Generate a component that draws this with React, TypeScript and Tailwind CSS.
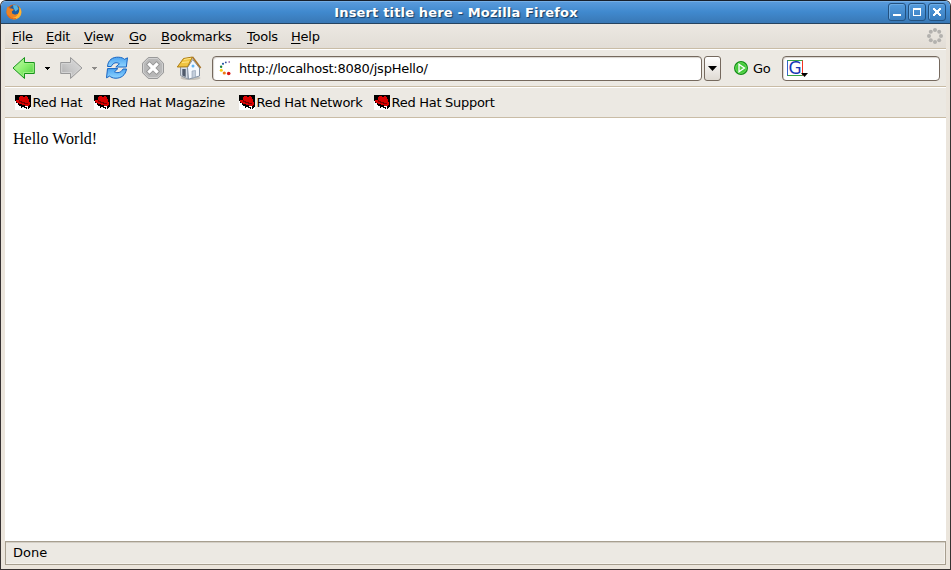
import React from "react";

const menus = [
  { name: "File", w: "w-[34px]" },
  { name: "Edit", w: "w-[38px]" },
  { name: "View", w: "w-[45px]" },
  { name: "Go", w: "w-[32px]" },
  { name: "Bookmarks", w: "w-[86px]" },
  { name: "Tools", w: "w-[44px]" },
  { name: "Help", w: "w-[40px]" },
];

const bookmarks = [
  { name: "Red Hat", w: "w-[79px]" },
  { name: "Red Hat Magazine", w: "w-[145px]" },
  { name: "Red Hat Network", w: "w-[135px]" },
  { name: "Red Hat Support", w: "w-[130px]" },
];

function FirefoxLogo() {
  return (
    <svg width="16" height="16" viewBox="0 0 16 16">
      <defs>
        <linearGradient id="fox" x1="0" y1="0" x2="1" y2="1">
          <stop offset="0" stopColor="#c9500f" />
          <stop offset="0.55" stopColor="#ee7d1c" />
          <stop offset="1" stopColor="#ffc940" />
        </linearGradient>
      </defs>
      <circle cx="8" cy="8" r="7.6" fill="url(#fox)" />
      <circle cx="8.6" cy="6" r="5" fill="#1f5c9f" />
      <path d="M7 1 11 1.3 12.5 5 9.5 7.5 7.5 4Z" fill="#55b4e2" />
      <path d="M.7 5 1.8 2.2l1.4 2 2.8.3 2 1.2-2.2 1.8.6 2.3 2.8 1 3-.7-2 2.6-4 1-4-2L.5 9Z" fill="#ee8424" />
      <path d="M13.4 3c2.7 3 2 8-1 10.2-2 1.5-4 1.5-6 .8 4 0 7.4-4 7-11Z" fill="#ffb733" />
      <path d="M1.5 11c1.8 3 5 4.4 8.5 3.7" stroke="#e0651d" fill="none" />
    </svg>
  );
}

function Arrow({ forward = false }: { forward?: boolean }) {
  return (
    <svg width="24" height="24" viewBox="0 0 24 24" className={forward ? "-scale-x-100" : ""}>
      <defs>
        <linearGradient id={forward ? "arrowGray" : "arrowGreen"} x1="0" y1="0" x2="1" y2="1">
          <stop offset="0" stopColor={forward ? "#dedede" : "#d1ffb4"} />
          <stop offset="0.5" stopColor={forward ? "#c9c9c9" : "#8cef70"} />
          <stop offset="1" stopColor={forward ? "#aaa" : "#40c936"} />
        </linearGradient>
      </defs>
      <path d="M1 12 12.5 1.5v5h9.8v11h-9.8v5Z" fill={forward ? "url(#arrowGray)" : "url(#arrowGreen)"} stroke={forward ? "#999" : "#16931a"} strokeLinejoin="round" />
      <path d="M2.8 12 11.5 3.9v3.6h9.8v9h-9.8v3.6Z" fill="none" stroke={forward ? "#d4d4d4" : "#a0f086"} />
    </svg>
  );
}

function Caret({ gray = false }: { gray?: boolean }) {
  return (
    <svg width="5" height="3" viewBox="0 0 5 3" shapeRendering="crispEdges">
      <path d="M0 0h5v1H4v1H3v1H2V2H1V1H0Z" fill={gray ? "#8d8b88" : "#000"} />
    </svg>
  );
}

function Reload() {
  return (
    <svg width="24" height="24" viewBox="0 0 24 24">
      <defs>
        <linearGradient id="reload" x2="0" y2="1">
          <stop stopColor="#4ba3f0" />
          <stop offset="1" stopColor="#92d6ff" />
        </linearGradient>
      </defs>
      <g fill="url(#reload)" stroke="#1764c2" strokeLinejoin="round">
        <path d="M2.5 10.5C3 4 7.5 .9 13.5 1.2c3 .1 4.8 1 6 2.1l3-1.5-1.2 9.2H10.8l3.6-3.2c-2.8-2-6.3-1.3-8.2 2.7Z" />
        <path d="M21.5 13c-.8 6-5.5 9.6-11.5 9.2-2.2-.2-4-.9-5.3-2.1l-3.2 1.7 1-9.2h10.4l-3.4 3.2c3 1.8 6.6.8 8.5-2.8Z" />
      </g>
    </svg>
  );
}

function Stop() {
  return (
    <svg width="24" height="24" viewBox="0 0 24 24">
      <path d="M7.3 1.5h9.4l5.8 5.8v9.4l-5.8 5.8H7.3l-5.8-5.8V7.3Z" fill="#b8b8b8" stroke="#999" />
      <path d="M7.7 2.5h8.6l5.2 5.2v8.6l-5.2 5.2H7.7l-5.2-5.2V7.7Z" fill="none" stroke="#d1d1d1" />
      <path d="m8.5 8.5 7 7m0-7-7 7" stroke="#969696" strokeWidth="5" strokeLinecap="square" />
      <path d="m8.5 8.5 7 7m0-7-7 7" stroke="#fff" strokeWidth="3.2" strokeLinecap="square" />
    </svg>
  );
}

function Home() {
  return (
    <svg width="26" height="26" viewBox="0 0 26 26">
      <ellipse cx="14.5" cy="23" rx="10" ry="2" fill="#aaa69f" opacity=".6" />
      <path d="M4.5 11.5 12 11v13l-7.5-3.4Z" fill="#d5dde7" stroke="#8f98a3" />
      <path d="m11.5 12.5 5.2-8 6.8 8.5v8l-11 3.2Z" fill="#f4f8fd" stroke="#8492a3" />
      <path d="M6.3 14h3.4v8l-3.4-1.5Z" fill="#505b6b" />
      <path d="m16 16 3.5-.5v6.7L16 23Z" fill="#c3cedb" stroke="#8d9caf" strokeWidth=".6" />
      <circle cx="17" cy="11" r="1.5" fill="#60b4f4" />
      <path d="M7.5 3.5 16.5 2 11.5 11.8l-10.2.2Z" fill="#f0c441" stroke="#ad7c10" strokeLinejoin="round" />
      <path d="m8 4.5 7-1.2M6 7.5l7-.7" stroke="#ffe78b" />
      <path d="m16.5 2 8.2 11" fill="none" stroke="#a8752c" strokeWidth="1.6" />
    </svg>
  );
}

function RedHat() {
  return (
    <svg width="16" height="15" viewBox="0 0 16 15" shapeRendering="crispEdges">
      <path d="M0 0h16v15H0Z" fill="#000" />
      <path d="M0 6h1v2h2v2h2v1h3v1h2v-1h5v1h1v3H0Z" fill="#fff" />
      <path d="M5 1h3v1h2V1h2v1h1v2h1v3h1v3h-1v1h-4v-1H7V9H4V8H2V7H1V5h3V2h1Z" fill="#d80000" />
      <path d="M4 5h1v1h2v1h3v1h3v1H9V8H6V7H4Z" fill="#780000" />
      <path d="M3 9h2v1h3v1h2v1h2v2h-1v-1H9v-1H7v1H6v-2H4v-1H3Z M13 11h2v2h-1v1h-1Z" fill="#000" />
    </svg>
  );
}

function Spinner() {
  const dots = [
    [12.2, 2, "#703090", 0.8], [8.8, 2.4, "#334f9c", 0.9], [6, 3.8, "#2758a6", 1.1],
    [4.1, 6.7, "#198039", 1.2], [4.3, 10.3, "#f6cd13", 1.5], [7.3, 13, "#ed7915", 1.6],
    [11.7, 13.5, "#d81717", 1.8],
  ] as const;
  return (
    <svg width="16" height="16" viewBox="1 0 16 16">
      {dots.map(([x, y, color, r]) => <circle key={color} cx={x} cy={y} r={r} fill={color} />)}
    </svg>
  );
}

function Throbber() {
  return (
    <svg width="16" height="16" viewBox="0 0 16 16" fill="#b3b1ae">
      <circle cx="8" cy="2" r="2" /><circle cx="12.2" cy="3.8" r="2" />
      <circle cx="14" cy="8" r="2" /><circle cx="12.2" cy="12.2" r="2" />
      <circle cx="8" cy="14" r="2" /><circle cx="3.8" cy="12.2" r="2" />
      <circle cx="2" cy="8" r="2" /><circle cx="3.8" cy="3.8" r="2" />
    </svg>
  );
}

function WindowButton({ kind }: { kind: string }) {
  return (
    <div className="flex h-[18px] w-[18px] items-center justify-center rounded-[3px] border border-[#23517f] bg-linear-to-b from-[#549bdd] to-[#397ec0] shadow-[inset_1px_1px_0_#6cabe5]">
      <svg width="10" height="10" viewBox="0 0 10 10" shapeRendering="crispEdges">
        {kind === "min" && <path d="M1 7h8v2H1Z" fill="#fff" />}
        {kind === "max" && <path d="M1 1h8v8H1Zm1 2v5h6V3Z" fill="#fff" fillRule="evenodd" />}
        {kind === "close" && <path d="M1 1h2v1h1v1h2V2h1V1h2v2H8v1H7v2h1v1h1v2H7V8H6V7H4v1H3v1H1V7h1V6h1V4H2V3H1Z" fill="#fff" />}
      </svg>
    </div>
  );
}

export default function App() {
  return (
    <div className="h-[570px] w-[951px] overflow-hidden bg-white font-['DejaVu_Sans',sans-serif] text-[13px] leading-4 tracking-[-0.24px] text-black">
      <div className="flex h-full flex-col overflow-hidden rounded-t-[6px] border border-t-[#171f2b] border-r-[#373232] border-b-[#373232] border-l-[#373232] bg-[#ece9e3]">
        <header className="flex h-[23px] shrink-0 items-center border-b border-[#26435f] bg-linear-to-b from-[#5b9cdd] via-[#4089ce] to-[#3978b5] pr-[4px] pl-[5px] shadow-[inset_0_1px_0_#75aee5]">
          <FirefoxLogo />
          <h1 className="flex-1 pt-[2px] pl-[2px] text-center text-[13px] leading-4 font-bold tracking-[0.16px] whitespace-nowrap text-white [text-shadow:1px_1px_1px_#173b60]">
            Insert title here - Mozilla Firefox
          </h1>
          <div className="flex gap-[2px]">
            <WindowButton kind="min" /><WindowButton kind="max" /><WindowButton kind="close" />
          </div>
        </header>

        <div className="flex min-h-0 flex-1 flex-col border-r-4 border-b-[4px] border-l-4 border-[#ebe5dc] shadow-[inset_1px_0_0_#f8f5f0]">
          <nav className="flex h-[25px] shrink-0 items-center border-b border-[#c9bca6] bg-linear-to-b from-[#ece8e2] to-[#e2ddd6] pr-[3px] pl-[7px]">
            {menus.map(({ name, w }) => (
              <div key={name} className={`${w} shrink-0 pt-[2px] whitespace-nowrap`}>
                <span className="underline decoration-1 underline-offset-2">{name[0]}</span>{name.slice(1)}
              </div>
            ))}
            <div className="ml-auto"><Throbber /></div>
          </nav>

          <div className="flex h-[38px] shrink-0 items-center border-t border-b border-t-white border-b-[#c9bca6] bg-[#ece9e3] pl-[7px]">
            <Arrow />
            <div className="ml-[9px]"><Caret /></div>
            <div className="ml-[9px]"><Arrow forward /></div>
            <div className="ml-[9px]"><Caret gray /></div>
            <div className="ml-[8px]"><Reload /></div>
            <div className="ml-[12px]"><Stop /></div>
            <div className="ml-[11px]"><Home /></div>
            <div className="ml-[10px] flex h-[25px] w-[490px] shrink-0 items-center rounded-[4px] border border-[#75695e] bg-white pl-[5px] shadow-[inset_1px_1px_1px_#d8d4cf]">
              <Spinner />
              <span className="ml-[5px] pt-px whitespace-nowrap">http://localhost:8080/jspHello/</span>
            </div>
            <div className="ml-[2px] flex h-[25px] w-[17px] shrink-0 items-center justify-center rounded-[3px] border border-[#75695e] bg-linear-to-b from-white to-[#dfdad3]">
              <svg width="9" height="5" viewBox="0 0 9 5"><path d="M0 0h9L4.5 5Z" /></svg>
            </div>
            <svg className="ml-[13px]" width="14" height="14" viewBox="0 0 14 14">
              <circle cx="7" cy="7" r="6.4" fill="#42c839" stroke="#168d1a" strokeWidth="1.2" />
              <circle cx="7" cy="7" r="5.3" fill="none" stroke="#6bdc5c" strokeWidth=".8" />
              <path d="m5 3.2 5.5 3.8L5 10.8Z" fill="#5ecf50" stroke="#fff" strokeWidth="1.3" />
            </svg>
            <span className="ml-[5px] w-[18px] pt-px">Go</span>
            <div className="ml-[11px] flex h-[25px] w-[158px] shrink-0 items-center rounded-[4px] border border-[#75695e] bg-white pl-[4px] shadow-[inset_1px_1px_1px_#d8d4cf]">
              <div className="relative flex h-[16px] w-[16px] items-center justify-center border border-t-[#36a344] border-r-[#f33423] border-b-[#36a344] border-l-[#3565cc]">
                <span className="text-[17px] leading-[14px] text-[#1737b5]">G</span>
                <svg className="absolute -right-[6px] -bottom-[2px]" width="7" height="4" viewBox="0 0 7 4"><path d="M0 0h7L3.5 4Z" /></svg>
              </div>
            </div>
          </div>

          <div className="flex h-[31px] shrink-0 items-center border-t border-b border-t-white border-b-[#c9bca6] bg-[#ece9e3] pl-[10px]">
            {bookmarks.map(({ name, w }) => (
              <div key={name} className={`${w} flex shrink-0 items-start gap-[1.5px] tracking-[-0.28px] whitespace-nowrap`}>
                <RedHat /><span>{name}</span>
              </div>
            ))}
          </div>

          <main className="min-h-0 flex-1 bg-white pt-[12px] pl-[8px] font-['Liberation_Serif',serif] text-[16px] leading-[18px] tracking-normal">Hello World!</main>

          <footer className="flex h-[24px] shrink-0 items-center border border-[#a79f90] bg-[#ece9e3] pl-[7px] tracking-normal shadow-[inset_0_1px_0_#d3cec5,inset_-1px_-1px_0_#f5f2ed]">Done</footer>
        </div>
      </div>
    </div>
  );
}
